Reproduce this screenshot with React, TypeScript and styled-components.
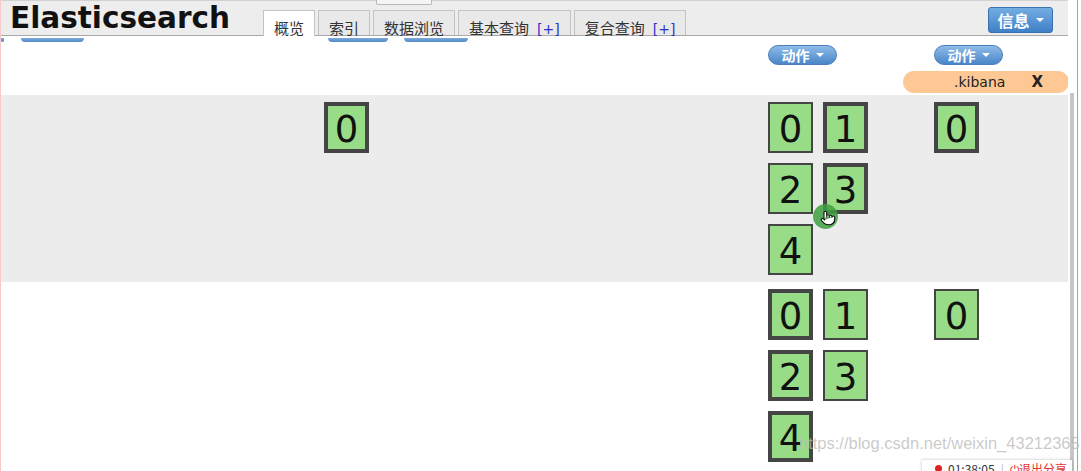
import React from "react";
import styled, { createGlobalStyle } from "styled-components";
import { Pointer } from "lucide-react";

const GlobalStyle = createGlobalStyle`
  html, body {
    margin: 0;
    padding: 0;
    height: 100%;
    overflow: hidden;
    background: #fff;
  }
  body {
    font-family: "DejaVu Sans", Verdana, "Noto Sans CJK SC", sans-serif;
  }
`;

const COLS = "320px 440px 142px 166px";

const Page = styled.div`
  position: relative;
  display: flex;
  width: 1081px;
  height: 471px;
  overflow: hidden;
  border-left: 1px solid #f6caca;
  box-sizing: border-box;
`;

const Main = styled.div`
  width: 1067px;
  display: flex;
  flex-direction: column;
`;

const Rail = styled.div`
  position: relative;
  flex: 1;
  background: #fff;
  &::before {
    content: "";
    position: absolute;
    left: 2px;
    top: 93px;
    bottom: 0;
    width: 4px;
    background: #c6c6c6;
  }
  &::after {
    content: "";
    position: absolute;
    left: 9px;
    top: 0;
    bottom: 0;
    width: 1px;
    background: #e08a8a;
  }
`;

const Header = styled.div`
  position: relative;
  height: 36px;
  box-sizing: border-box;
  display: flex;
  padding-left: 9px;
  background: #ededed;
  border-top: 1px solid #d2d2d2;
  border-bottom: 1px solid #a9a9a9;
`;

const Remnant = styled.div`
  position: absolute;
  left: 375px;
  top: -1px;
  width: 54px;
  height: 4px;
  border: 1px solid #b9b9b9;
  border-top: none;
  background: #f4f4f4;
  border-radius: 0 0 2px 2px;
`;

const Title = styled.h1`
  flex: 0 0 253px;
  margin: 0;
  font-family: "DejaVu Sans", Verdana, sans-serif;
  font-weight: bold;
  font-size: 29.5px;
  line-height: 34px;
  color: #111;
`;

const Tabs = styled.div`
  align-self: flex-end;
  display: flex;
  gap: 3px;
  margin-bottom: -1px;
`;

const Tab = styled.div<{ $active?: boolean }>`
  height: ${(p) => (p.$active ? 26 : 25)}px;
  box-sizing: border-box;
  padding: 7px 10px 0;
  border: 1px solid #c3c3c3;
  border-bottom: none;
  background: ${(p) => (p.$active ? "#fff" : "#e9e9e9")};
  font-family: "Noto Sans CJK SC", sans-serif;
  font-size: 15px;
  line-height: 19px;
  color: #333;
  white-space: nowrap;
`;

const Plus = styled.span`
  margin-left: 8px;
  font-family: "DejaVu Sans", sans-serif;
  font-size: 14px;
  color: #3232c8;
`;

const InfoButton = styled.div`
  margin: 6px 15px 0 auto;
  width: 65px;
  height: 26px;
  box-sizing: border-box;
  display: flex;
  align-items: center;
  justify-content: center;
  gap: 6px;
  border: 1px solid #3a72b0;
  border-radius: 3px;
  background: linear-gradient(#74ade3, #3f80c6);
  color: #fff;
  font-family: "Noto Sans CJK SC", sans-serif;
  font-weight: bold;
  font-size: 16px;
`;

const Caret = styled.span`
  width: 0;
  height: 0;
  border-left: 4px solid transparent;
  border-right: 4px solid transparent;
  border-top: 4px solid #fff;
`;

const Row = styled.div<{ $bg?: string; $h: number }>`
  display: grid;
  grid-template-columns: ${COLS};
  height: ${(p) => p.$h}px;
  background: ${(p) => p.$bg ?? "#fff"};
  flex-shrink: 0;
`;

const Cell = styled.div<{ $indent: number }>`
  padding: 7px 0 0 ${(p) => p.$indent}px;
`;

const HeadCell = styled.div<{ $indent?: number }>`
  display: flex;
  flex-direction: column;
  align-items: flex-start;
  padding: 9px 0 0 ${(p) => p.$indent ?? 0}px;
  gap: 6px;
`;

const ClipRow = styled.div`
  display: flex;
  margin-top: 2px;
`;

const ClipBtn = styled.div<{ $w: number; $ml: number }>`
  width: ${(p) => p.$w}px;
  height: 4px;
  margin-left: ${(p) => p.$ml}px;
  background: linear-gradient(#7eaadb, #5088c6);
  border-radius: 0 0 8px 8px;
`;

const ActionButton = styled.div<{ $offset?: number }>`
  width: 69px;
  height: 20px;
  margin-left: ${(p) => p.$offset ?? 0}px;
  box-sizing: border-box;
  display: flex;
  align-items: center;
  justify-content: center;
  gap: 6px;
  border: 1px solid #4d7fbd;
  border-radius: 10px;
  background: linear-gradient(#8ebbe8, #4a86c8);
  color: #fff;
  font-family: "Noto Sans CJK SC", sans-serif;
  font-weight: bold;
  font-size: 14px;
`;

const IndexPill = styled.div`
  width: 166px;
  height: 22px;
  box-sizing: border-box;
  display: flex;
  align-items: center;
  padding-left: 51px;
  border-radius: 11px;
  background: #fdc893;
  font-family: "DejaVu Sans", sans-serif;
  font-size: 14px;
  color: #222;
`;

const Close = styled.span`
  margin-left: 26px;
  font-weight: bold;
  font-size: 15px;
`;

const ShardGrid = styled.div`
  display: flex;
  flex-wrap: wrap;
  width: 100px;
  gap: 10px;
`;

const Shard = styled.div<{ $primary?: boolean }>`
  width: 45px;
  height: 51px;
  box-sizing: border-box;
  display: flex;
  align-items: center;
  justify-content: center;
  border: ${(p) => (p.$primary ? 4 : 2)}px solid #454545;
  background: #99dc87;
  font-family: "DejaVu Sans", Verdana, sans-serif;
  font-size: 37px;
  line-height: 1;
  padding-top: 3px;
  color: #111;
`;

const Cursor = styled.div`
  position: absolute;
  left: 812px;
  top: 204px;
  width: 25px;
  height: 25px;
  border-radius: 50%;
  background: rgba(62, 160, 62, 0.85);
  svg {
    position: absolute;
    left: 7px;
    top: 6px;
  }
`;

const Watermark = styled.div`
  position: absolute;
  left: 798px;
  top: 434px;
  font-family: "Liberation Sans", Arial, sans-serif;
  font-size: 16.5px;
  color: rgba(185, 185, 185, 0.75);
  white-space: nowrap;
`;

const ShareBar = styled.div`
  position: absolute;
  left: 921px;
  top: 460px;
  width: 150px;
  height: 22px;
  display: flex;
  align-items: flex-start;
  gap: 6px;
  padding: 2px 0 0 13px;
  box-sizing: border-box;
  background: #fff;
  box-shadow: 0 0 3px rgba(0, 0, 0, 0.25);
  font-family: "Noto Sans CJK SC", sans-serif;
  font-size: 12px;
  line-height: 14px;
  color: #333;
`;

const Dot = styled.span`
  width: 7px;
  height: 7px;
  margin-top: 3px;
  border-radius: 50%;
  background: #e02020;
`;

const Divider = styled.span`
  color: #bbb;
`;

const Exit = styled.span`
  color: #d33;
`;

type Shards = { n: number; p?: boolean }[];

const rows: { bg?: string; h: number; a: Shards; b: Shards; c: Shards }[] = [
  {
    bg: "#ececec",
    h: 187,
    a: [{ n: 0, p: true }],
    b: [{ n: 0 }, { n: 1, p: true }, { n: 2 }, { n: 3, p: true }, { n: 4 }],
    c: [{ n: 0, p: true }],
  },
  {
    h: 188,
    a: [],
    b: [{ n: 0, p: true }, { n: 1 }, { n: 2, p: true }, { n: 3 }, { n: 4, p: true }],
    c: [{ n: 0 }],
  },
];

function ShardList({ items }: { items: Shards }) {
  return (
    <ShardGrid>
      {items.map((s, i) => (
        <Shard key={i} $primary={s.p}>
          {s.n}
        </Shard>
      ))}
    </ShardGrid>
  );
}

export default function App() {
  return (
    <>
      <GlobalStyle />
      <Page>
        <Main>
          <Header>
            <Remnant />
            <Title>Elasticsearch</Title>
            <Tabs>
              <Tab $active>概览</Tab>
              <Tab>索引</Tab>
              <Tab>数据浏览</Tab>
              <Tab>
                基本查询<Plus>[+]</Plus>
              </Tab>
              <Tab>
                复合查询<Plus>[+]</Plus>
              </Tab>
            </Tabs>
            <InfoButton>
              信息 <Caret />
            </InfoButton>
          </Header>

          <Row $h={59}>
            <div>
              <ClipRow>
                <ClipBtn $w={3} $ml={0} />
                <ClipBtn $w={63} $ml={17} />
              </ClipRow>
            </div>
            <div>
              <ClipRow>
                <ClipBtn $w={60} $ml={7} />
                <ClipBtn $w={64} $ml={16} />
              </ClipRow>
            </div>
            <HeadCell $indent={7}>
              <ActionButton>
                动作 <Caret />
              </ActionButton>
            </HeadCell>
            <HeadCell>
              <ActionButton $offset={31}>
                动作 <Caret />
              </ActionButton>
              <IndexPill>
                .kibana<Close>X</Close>
              </IndexPill>
            </HeadCell>
          </Row>

          {rows.map((r, i) => (
            <Row key={i} $bg={r.bg} $h={r.h}>
              <Cell $indent={0} />
              <Cell $indent={3}>
                <ShardList items={r.a} />
              </Cell>
              <Cell $indent={7}>
                <ShardList items={r.b} />
              </Cell>
              <Cell $indent={31}>
                <ShardList items={r.c} />
              </Cell>
            </Row>
          ))}
        </Main>
        <Rail />

        <Cursor>
          <Pointer size={16} fill="#fff" color="#111" strokeWidth={1.6} />
        </Cursor>
        <Watermark>https://blog.csdn.net/weixin_43212365</Watermark>
        <ShareBar>
          <Dot />
          <span>01:38:05</span>
          <Divider>|</Divider>
          <Exit>⏻退出分享</Exit>
        </ShareBar>
      </Page>
    </>
  );
}
